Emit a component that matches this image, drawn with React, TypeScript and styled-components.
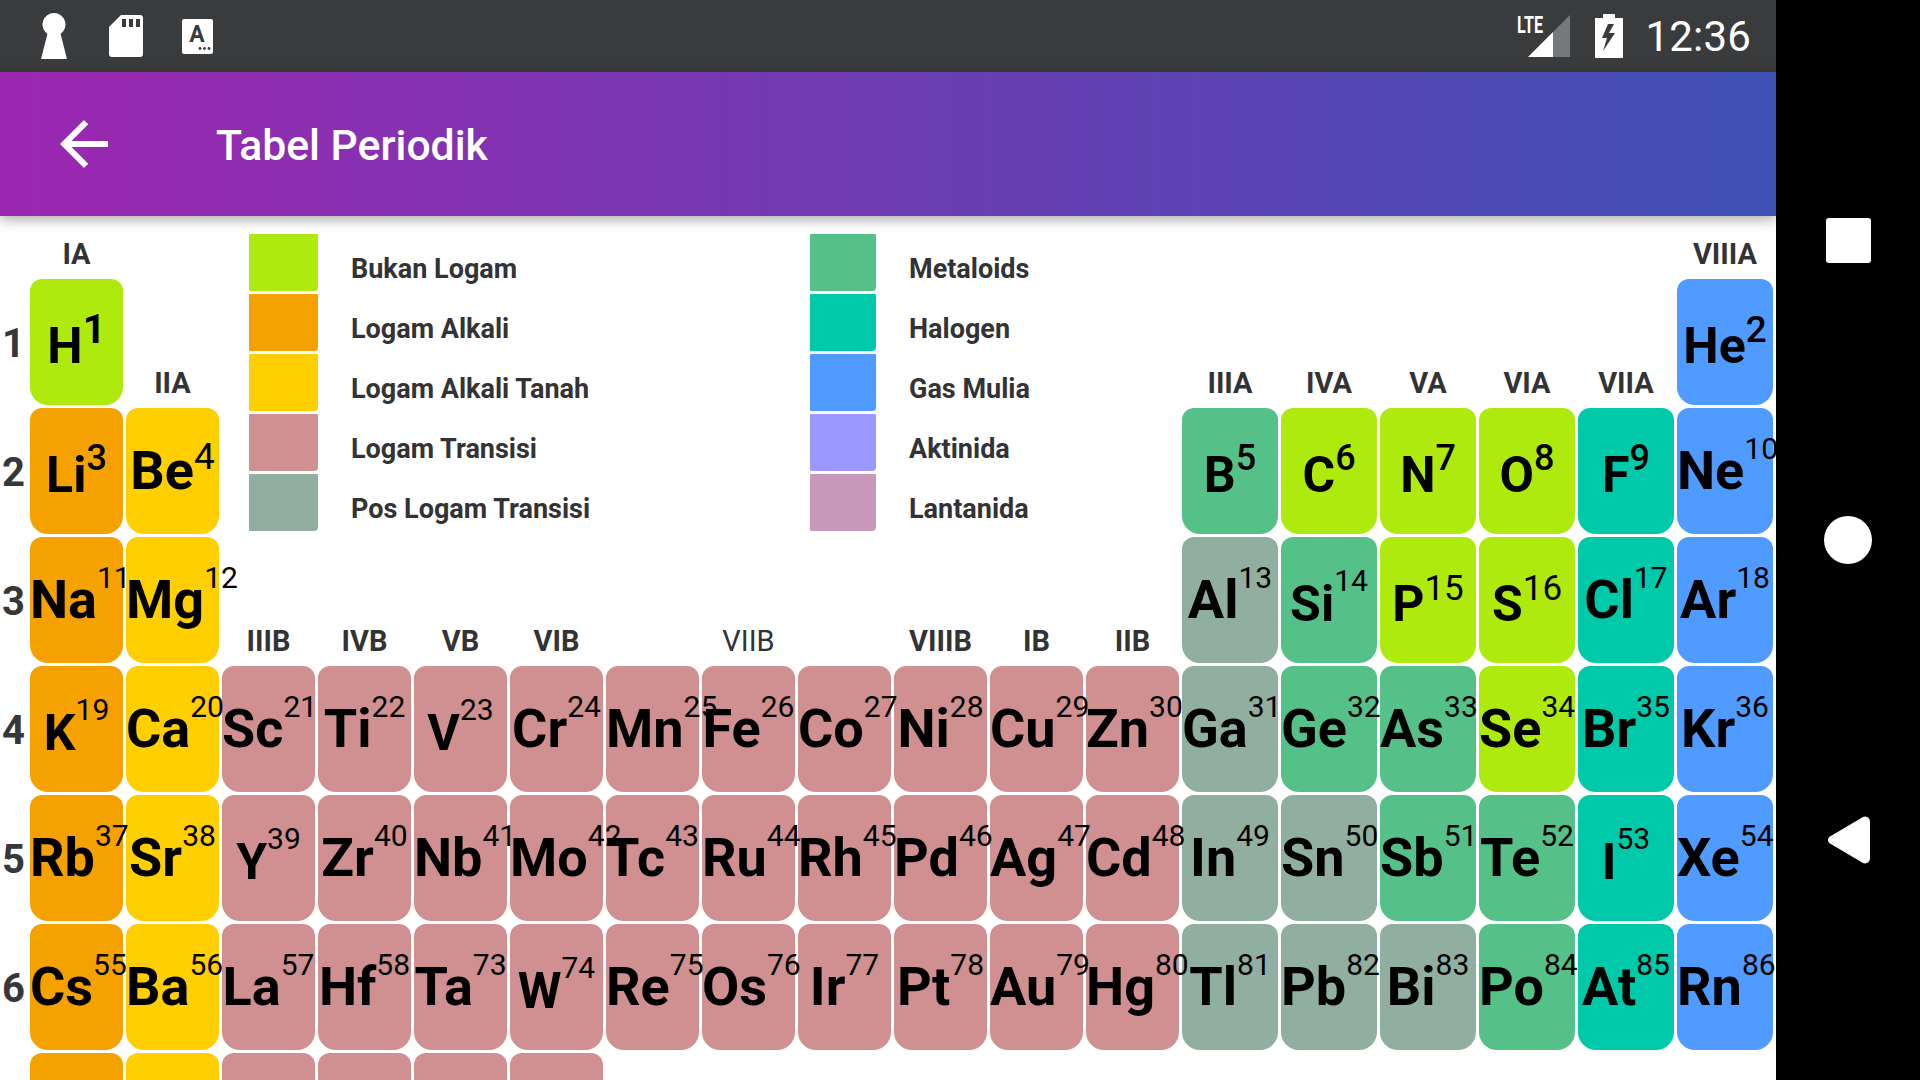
import React from "react";
import styled, { createGlobalStyle } from "styled-components";

const GlobalStyle = createGlobalStyle`
  html, body { margin: 0; padding: 0; width: 1920px; height: 1080px; overflow: hidden; background: #000; }
  body { font-family: Roboto, "Noto Sans", sans-serif; }
`;

const COLORS: Record<string, string> = {
  non: "#aeea0e",
  alk: "#f5a100",
  ear: "#ffcf00",
  tra: "#d09091",
  pos: "#90afa0",
  met: "#55c189",
  hal: "#00c9aa",
  nob: "#4f9bff",
  act: "#9b99ff",
  lan: "#c899ba",
};

type El = { s: string; n: number; c: string; col: number; p: number };

const row = (p: number, start: number, items: string): El[] =>
  items.split(" ").map((it, i) => {
    const [s, n, c] = it.split(":");
    return { s, n: Number(n), c, col: start + i, p };
  });

const ELEMENTS: El[] = [
  ...row(1, 1, "H:1:non"),
  ...row(1, 18, "He:2:nob"),
  ...row(2, 1, "Li:3:alk Be:4:ear"),
  ...row(2, 13, "B:5:met C:6:non N:7:non O:8:non F:9:hal Ne:10:nob"),
  ...row(3, 1, "Na:11:alk Mg:12:ear"),
  ...row(3, 13, "Al:13:pos Si:14:met P:15:non S:16:non Cl:17:hal Ar:18:nob"),
  ...row(4, 1, "K:19:alk Ca:20:ear Sc:21:tra Ti:22:tra V:23:tra Cr:24:tra Mn:25:tra Fe:26:tra Co:27:tra Ni:28:tra Cu:29:tra Zn:30:tra Ga:31:pos Ge:32:met As:33:met Se:34:non Br:35:hal Kr:36:nob"),
  ...row(5, 1, "Rb:37:alk Sr:38:ear Y:39:tra Zr:40:tra Nb:41:tra Mo:42:tra Tc:43:tra Ru:44:tra Rh:45:tra Pd:46:tra Ag:47:tra Cd:48:tra In:49:pos Sn:50:pos Sb:51:met Te:52:met I:53:hal Xe:54:nob"),
  ...row(6, 1, "Cs:55:alk Ba:56:ear La:57:tra Hf:58:tra Ta:73:tra W:74:tra Re:75:tra Os:76:tra Ir:77:tra Pt:78:tra Au:79:tra Hg:80:tra Tl:81:pos Pb:82:pos Bi:83:pos Po:84:met At:85:hal Rn:86:nob"),
];

const CLIPPED = ["alk", "ear", "tra", "tra", "tra", "tra"];

const SMALL = new Set(["H", "He", "Li", "B", "C", "N", "O", "F", "Si", "P", "S", "K", "V", "Y", "I", "W"]);

type SupStyle = { size: number; weight: number; raise: number };
const supStyle = (e: El): SupStyle => {
  if (e.s === "H") return { size: 40, weight: 700, raise: 20 };
  if (e.s === "He") return { size: 37, weight: 500, raise: 21 };
  if (e.s === "Be") return { size: 37, weight: 400, raise: 20 };
  if (e.n <= 9) return { size: 36, weight: 500, raise: 22 };
  if (e.s === "P" || e.s === "S") return { size: 35, weight: 400, raise: 21 };
  return { size: 30, weight: 400, raise: 30 };
};

const GROUPS: { t: string; col: number; span?: number; p: number; thin?: boolean }[] = [
  { t: "IA", col: 1, p: 0 },
  { t: "VIIIA", col: 18, p: 0 },
  { t: "IIA", col: 2, p: 1 },
  { t: "IIIA", col: 13, p: 1 },
  { t: "IVA", col: 14, p: 1 },
  { t: "VA", col: 15, p: 1 },
  { t: "VIA", col: 16, p: 1 },
  { t: "VIIA", col: 17, p: 1 },
  { t: "IIIB", col: 3, p: 3 },
  { t: "IVB", col: 4, p: 3 },
  { t: "VB", col: 5, p: 3 },
  { t: "VIB", col: 6, p: 3 },
  { t: "VIIB", col: 7, span: 3, p: 3, thin: true },
  { t: "VIIIB", col: 10, p: 3 },
  { t: "IB", col: 11, p: 3 },
  { t: "IIB", col: 12, p: 3 },
];

const LEGEND_A = [
  ["Bukan Logam", "non"],
  ["Logam Alkali", "alk"],
  ["Logam Alkali Tanah", "ear"],
  ["Logam Transisi", "tra"],
  ["Pos Logam Transisi", "pos"],
];
const LEGEND_B = [
  ["Metaloids", "met"],
  ["Halogen", "hal"],
  ["Gas Mulia", "nob"],
  ["Aktinida", "act"],
  ["Lantanida", "lan"],
];

const Screen = styled.div`
  display: flex;
  width: 1920px;
  height: 1080px;
  overflow: hidden;
`;

const Main = styled.div`
  width: 1776px;
  height: 1080px;
  display: flex;
  flex-direction: column;
  background: #fff;
  overflow: hidden;
`;

const StatusBar = styled.div`
  height: 72px;
  flex: none;
  background: #3a3b3d;
  display: flex;
  align-items: center;
  justify-content: space-between;
  padding: 0 25px 0 41px;
`;

const StatusGroup = styled.div<{ $gap: number }>`
  display: flex;
  align-items: center;
  gap: ${(p) => p.$gap}px;
`;

const Clock = styled.span`
  font-size: 42px;
  color: #fff;
  line-height: 72px;
  padding-top: 2px;
  letter-spacing: 0.2px;
`;

const AppBar = styled.header`
  height: 144px;
  flex: none;
  display: flex;
  align-items: center;
  padding-left: 48px;
  background: linear-gradient(90deg, #9c27b0 0%, #3f51b5 100%);
  box-shadow: 0 4px 12px rgba(0, 0, 0, 0.32);
  position: relative;
  z-index: 1;
`;

const Title = styled.h1`
  margin: 0 0 0 96px;
  padding-top: 1px;
  font-size: 42.7px;
  font-weight: 500;
  color: #fff;
`;

const Grid = styled.main`
  flex: 1;
  min-height: 0;
  display: grid;
  padding-top: 18px;
  grid-template-columns: 27px repeat(12, 93px) repeat(6, 96px);
  grid-template-rows: 42px repeat(7, 126px);
  column-gap: 3px;
  row-gap: 3px;
`;

const PeriodLabel = styled.div<{ $p: number }>`
  grid-column: 1;
  grid-row: ${(p) => p.$p + 1};
  align-self: center;
  padding-top: 3px;
  text-align: center;
  font-size: 40px;
  font-weight: 700;
  color: #37373a;
`;

const GroupLabel = styled.div<{ $col: number; $span: number; $p: number; $thin: boolean }>`
  grid-column: ${(p) => p.$col + 1} / span ${(p) => p.$span};
  grid-row: ${(p) => p.$p + 1};
  align-self: end;
  text-align: center;
  font-size: 29px;
  line-height: 33px;
  padding-bottom: 5px;
  font-weight: ${(p) => (p.$thin ? 400 : 700)};
  color: #333336;
`;

const Cell = styled.div<{ $col: number; $p: number; $bg: string; $small: boolean }>`
  grid-column: ${(p) => p.$col + 1};
  grid-row: ${(p) => p.$p + 1};
  background: ${(p) => p.$bg};
  border-radius: 12px 12px 18px 18px;
  display: flex;
  align-items: flex-start;
  padding-top: ${(p) => (p.$small ? 41 : 37)}px;
  box-sizing: border-box;
  min-width: 0;
`;

const Symbol = styled.div<{ $small: boolean }>`
  margin: 0 auto;
  white-space: nowrap;
  font-size: ${(p) => (p.$small ? 50 : 54)}px;
  line-height: 52px;
  font-weight: 700;
  color: #000;
  position: relative;
  z-index: 1;
`;

const Sup = styled.sup<{ $size: number; $weight: number; $raise: number }>`
  font-size: ${(p) => p.$size}px;
  font-weight: ${(p) => p.$weight};
  vertical-align: ${(p) => p.$raise}px;
  line-height: 0;
`;

const Legend = styled.div`
  grid-column: 4 / span 11;
  grid-row: 1 / span 3;
  display: flex;
  padding-left: 27px;
`;

const LegendColumn = styled.div<{ $w: number }>`
  width: ${(p) => p.$w}px;
  display: flex;
  flex-direction: column;
  gap: 3px;
`;

const LegendRow = styled.div`
  height: 57px;
  display: flex;
  align-items: center;
  gap: 33px;
`;

const Swatch = styled.div<{ $bg: string; $w: number }>`
  width: ${(p) => p.$w}px;
  height: 57px;
  background: ${(p) => p.$bg};
  border-radius: 1px 1px 4px 1px;
`;

const LegendText = styled.span`
  padding-top: 13px;
  font-size: 27px;
  font-weight: 700;
  color: #333336;
`;

const NavBar = styled.nav`
  width: 144px;
  height: 1080px;
  background: #000;
  display: flex;
  flex-direction: column;
  justify-content: center;
`;

const NavSlot = styled.div`
  height: 300px;
  display: flex;
  align-items: center;
  justify-content: center;
`;

const NavSquare = styled.div`
  width: 45px;
  height: 45px;
  background: #fff;
  border-radius: 3px;
`;

const NavCircle = styled.div`
  width: 48px;
  height: 48px;
  background: #fff;
  border-radius: 50%;
`;

const Keyhole = () => (
  <svg width="29" height="46" viewBox="0 0 29 46">
    <path d="M13 0a11.5 11.5 0 0 1 6.6 20.9L26 46H0L6.4 20.9A11.5 11.5 0 0 1 13 0z" fill="#fff" />
  </svg>
);

const SdCard = () => (
  <svg width="34" height="42" viewBox="0 0 34 42">
    <path d="M12 0h19a3 3 0 0 1 3 3v36a3 3 0 0 1-3 3H3a3 3 0 0 1-3-3V12z" fill="#fff" />
    <path d="M13 4h4v8h-4zM20 4h4v8h-4zM27 4h4v8h-4z" fill="#3a3b3d" />
  </svg>
);

const AutofillCard = () => (
  <svg width="31" height="35" viewBox="0 0 31 35">
    <rect width="31" height="35" rx="2" fill="#fff" />
    <text x="15" y="23" textAnchor="middle" fontFamily="Roboto" fontWeight="700" fontSize="23" fill="#3a3b3d">
      A
    </text>
    <circle cx="18" cy="29.5" r="1.4" fill="#3a3b3d" />
    <circle cx="22.5" cy="29.5" r="1.4" fill="#3a3b3d" />
    <circle cx="27" cy="29.5" r="1.4" fill="#3a3b3d" />
  </svg>
);

const Signal = () => (
  <svg width="53" height="42" viewBox="0 0 53 42" overflow="visible">
    <text x="0" y="18" fontFamily="Roboto" fontWeight="700" fontSize="24" fill="#fff" textLength="26" lengthAdjust="spacingAndGlyphs">
      LTE
    </text>
    <path d="M11 42L36 17V42z" fill="#fff" />
    <path d="M36 17L53 0V42H36z" fill="#777879" />
  </svg>
);

const Battery = () => (
  <svg width="28" height="44" viewBox="0 0 28 44">
    <path d="M8 0h12v4h8v40H0V4h8z" fill="#fff" />
    <path d="M13 10L7 24h5L8 37 20 19h-6l5-9z" fill="#3a3b3d" />
  </svg>
);

const BackArrow = () => (
  <svg width="72" height="72" viewBox="0 0 24 24">
    <path d="M20 11H7.83l5.59-5.59L12 4l-8 8 8 8 1.41-1.41L7.83 13H20v-2z" fill="#fff" />
  </svg>
);

const NavBack = () => (
  <svg width="46" height="52" viewBox="0 0 46 52">
    <path d="M38 3L5 22.5a4 4 0 0 0 0 7L38 49a5 5 0 0 0 7-4V7a5 5 0 0 0-7-4z" fill="#fff" />
  </svg>
);

export default function App() {
  return (
    <>
      <GlobalStyle />
      <Screen>
        <Main>
          <StatusBar>
            <StatusGroup $gap={39}>
              <Keyhole />
              <SdCard />
              <AutofillCard />
            </StatusGroup>
            <StatusGroup $gap={22}>
              <StatusGroup $gap={25}>
                <Signal />
                <Battery />
              </StatusGroup>
              <Clock>12:36</Clock>
            </StatusGroup>
          </StatusBar>
          <AppBar>
            <BackArrow />
            <Title>Tabel Periodik</Title>
          </AppBar>
          <Grid>
            {[1, 2, 3, 4, 5, 6].map((p) => (
              <PeriodLabel key={p} $p={p}>
                {p}
              </PeriodLabel>
            ))}
            {GROUPS.map((g) => (
              <GroupLabel key={g.t} $col={g.col} $span={g.span ?? 1} $p={g.p} $thin={!!g.thin}>
                {g.t}
              </GroupLabel>
            ))}
            <Legend>
              <LegendColumn $w={561}>
                {LEGEND_A.map(([t, c]) => (
                  <LegendRow key={t}>
                    <Swatch $bg={COLORS[c]} $w={69} />
                    <LegendText>{t}</LegendText>
                  </LegendRow>
                ))}
              </LegendColumn>
              <LegendColumn $w={300}>
                {LEGEND_B.map(([t, c]) => (
                  <LegendRow key={t}>
                    <Swatch $bg={COLORS[c]} $w={66} />
                    <LegendText>{t}</LegendText>
                  </LegendRow>
                ))}
              </LegendColumn>
            </Legend>
            {ELEMENTS.map((e) => {
              const small = SMALL.has(e.s);
              const sup = supStyle(e);
              return (
                <Cell key={e.s} $col={e.col} $p={e.p} $bg={COLORS[e.c]} $small={small}>
                  <Symbol $small={small}>
                    {e.s}
                    <Sup $size={sup.size} $weight={sup.weight} $raise={sup.raise}>
                      {e.n}
                    </Sup>
                  </Symbol>
                </Cell>
              );
            })}
            {CLIPPED.map((c, i) => (
              <Cell key={i} $col={i + 1} $p={7} $bg={COLORS[c]} $small={false} />
            ))}
          </Grid>
        </Main>
        <NavBar>
          <NavSlot>
            <NavSquare />
          </NavSlot>
          <NavSlot>
            <NavCircle />
          </NavSlot>
          <NavSlot>
            <NavBack />
          </NavSlot>
        </NavBar>
      </Screen>
    </>
  );
}
